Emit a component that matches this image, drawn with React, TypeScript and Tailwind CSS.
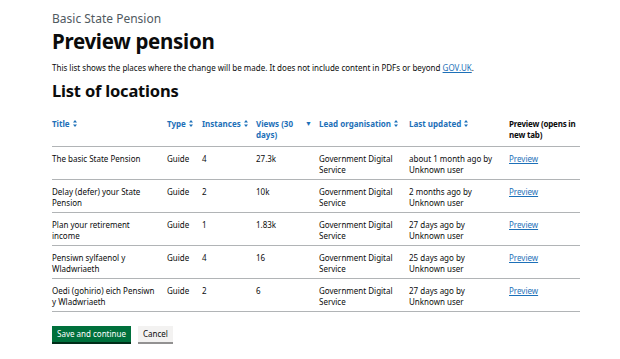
import React from 'react'

const rows = [
  { title: 'The basic State Pension', type: 'Guide', instances: '4', views: '27.3k', org: 'Government Digital Service', updated: 'about 1 month ago by Unknown user' },
  { title: 'Delay (defer) your State Pension', type: 'Guide', instances: '2', views: '10k', org: 'Government Digital Service', updated: '2 months ago by Unknown user' },
  { title: 'Plan your retirement income', type: 'Guide', instances: '1', views: '1.83k', org: 'Government Digital Service', updated: '27 days ago by Unknown user' },
  { title: 'Pensiwn sylfaenol y Wladwriaeth', type: 'Guide', instances: '4', views: '16', org: 'Government Digital Service', updated: '25 days ago by Unknown user' },
  { title: 'Oedi (gohirio) eich Pensiwn y Wladwriaeth', type: 'Guide', instances: '2', views: '6', org: 'Government Digital Service', updated: '27 days ago by Unknown user' },
]

const SortIcon = () => (
  <svg width="4" height="7" viewBox="0 0 4 7" className="inline-block ml-[3px] align-[0px]">
    <path d="M2 0 L4 2.6 H0 Z M2 7 L0 4.4 H4 Z" fill="currentColor" />
  </svg>
)

const SortHeader = ({ label }: { label: string }) => (
  <span className="text-[#1d70b8]">
    {label}
    <SortIcon />
  </span>
)

export default function App() {
  return (
    <div className="min-h-[359px] bg-white text-[#0b0c0c] font-['Noto_Sans',sans-serif]">
      <div className="mx-[52px] w-[528px] pt-[11px]">
        <span className="block text-[12px] leading-[15px] text-[#505a5f]">Basic State Pension</span>
        <h1 className="mt-[3px] text-[20.5px] leading-[24px] font-bold tracking-[-0.3px]">Preview pension</h1>
        <p className="mt-[9px] text-[8px] leading-[11px]">
          This list shows the places where the change will be made. It does not include content in PDFs or beyond{' '}
          <a href="#" className="text-[#1d70b8] underline">GOV.UK</a>.
        </p>
        <h2 className="mt-[8px] text-[16.5px] leading-[20px] font-bold tracking-[-0.2px]">List of locations</h2>

        <table className="mt-[15px] w-[528px] table-fixed border-collapse text-[8px] leading-[11px]">
          <colgroup>
            <col className="w-[115px]" />
            <col className="w-[35px]" />
            <col className="w-[54px]" />
            <col className="w-[63px]" />
            <col className="w-[90px]" />
            <col className="w-[100px]" />
            <col className="w-[71px]" />
          </colgroup>
          <thead>
            <tr className="border-b border-[#b1b4b6] text-left align-top font-bold">
              <th className="pt-[2px] pb-[6px] pr-2"><SortHeader label="Title" /></th>
              <th className="pt-[2px] pb-[6px] pr-1"><SortHeader label="Type" /></th>
              <th className="pt-[2px] pb-[6px] pr-1"><SortHeader label="Instances" /></th>
              <th className="pt-[2px] pb-[6px] pr-1">
                <div className="flex justify-between text-[#1d70b8]">
                  <span>Views (30 days)</span>
                  <span className="text-[7px] pr-[3px]">▼</span>
                </div>
              </th>
              <th className="pt-[2px] pb-[6px] pr-1"><SortHeader label="Lead organisation" /></th>
              <th className="pt-[2px] pb-[6px] pr-1"><SortHeader label="Last updated" /></th>
              <th className="pt-[2px] pb-[6px] whitespace-nowrap tracking-[-0.2px]">
                Preview (opens in
                <br />
                new tab)
              </th>
            </tr>
          </thead>
          <tbody>
            {rows.map((r) => (
              <tr key={r.title} className="border-b border-[#b1b4b6] align-top">
                <td className="pt-[6px] pb-[4px] pr-2">{r.title}</td>
                <td className="pt-[6px] pb-[4px]">{r.type}</td>
                <td className="pt-[6px] pb-[4px]">{r.instances}</td>
                <td className="pt-[6px] pb-[4px]">{r.views}</td>
                <td className="pt-[6px] pb-[4px] pr-2">{r.org}</td>
                <td className="pt-[6px] pb-[4px] pr-2">{r.updated}</td>
                <td className="pt-[6px] pb-[4px]">
                  <a href="#" className="text-[#1d70b8] underline">Preview</a>
                </td>
              </tr>
            ))}
          </tbody>
        </table>

        <div className="mt-[14px] flex gap-[7px]">
          <button className="h-[16px] px-[5px] bg-[#00703c] text-white text-[8px] leading-[16px] shadow-[0_2px_0_#002d18]">
            Save and continue
          </button>
          <button className="h-[16px] px-[5px] bg-[#f3f2f1] text-[#0b0c0c] text-[8px] leading-[16px] shadow-[0_2px_0_#929191]">
            Cancel
          </button>
        </div>
      </div>
    </div>
  )
}
